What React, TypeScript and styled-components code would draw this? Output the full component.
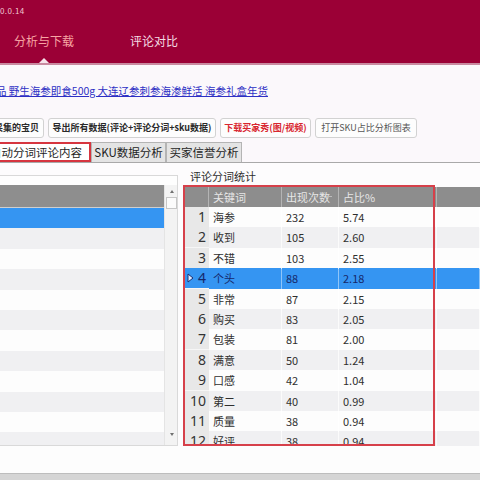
import styled, { createGlobalStyle } from "styled-components";

const GlobalStyle = createGlobalStyle`
  html, body { margin:0; padding:0; }
  body {
    width:480px;
    height:480px;
    overflow:hidden;
    background:#fbf8fb;
    font-family:"Noto Sans CJK SC","Noto Sans",sans-serif;
  }
`;

const Page = styled.div`
  width:480px;
  height:480px;
  display:flex;
  flex-direction:column;
  overflow:hidden;
`;

const TopBar = styled.header`
  height:63px;
  flex:none;
  background:#9b0036;
  border-bottom:2px solid #c98aa0;
  display:flex;
  flex-direction:column;
`;

const Version = styled.div`
  margin-top:6px;
  height:10px;
  line-height:10px;
  font-size:8px;
  color:#f0c6d1;
  letter-spacing:0.4px;
`;

const NavRow = styled.nav`
  margin-top:16px;
  height:31px;
  display:flex;
  padding-left:14px;
  gap:56px;
`;

const NavItem = styled.div<{ $active?: boolean }>`
  position:relative;
  font-size:12px;
  line-height:17px;
  color:${(p) => (p.$active ? "#f7a4a3" : "#f5dce3")};
  &::after{
    content:"";
    display:${(p) => (p.$active ? "block" : "none")};
    position:absolute;
    left:50%;
    bottom:0;
    margin-left:-5px;
    border-left:5px solid transparent;
    border-right:5px solid transparent;
    border-bottom:5px solid #f6e3ea;
  }
`;

const LinkRow = styled.div`
  padding-top:15px;
  height:16px;
  line-height:16px;
`;

const ItemLink = styled.a`
  margin-left:-4px;
  font-size:10.5px;
  color:#2d2fc4;
  text-decoration:underline;
  white-space:nowrap;
`;

const ButtonRow = styled.div`
  margin-top:22px;
  display:flex;
  gap:4px;
  height:20px;
`;

const ToolButton = styled.div<{ $w: number; $tone: "plain" | "bold" | "red"; $cut?: number }>`
  flex:none;
  box-sizing:border-box;
  width:${(p) => p.$w}px;
  margin-left:${(p) => (p.$cut ? -p.$cut : 0)}px;
  height:20px;
  border:1px solid #d2d2d2;
  border-radius:3px;
  background:#fdfdfd;
  font-size:9px;
  line-height:18px;
  text-align:center;
  white-space:nowrap;
  overflow:hidden;
  font-weight:${(p) => (p.$tone === "plain" ? 400 : 700)};
  color:${(p) => (p.$tone === "red" ? "#d8262f" : p.$tone === "bold" ? "#2a2a2a" : "#555")};
`;

const TabBar = styled.div`
  margin-top:4px;
  height:20px;
  display:flex;
  align-items:flex-end;
  border-bottom:1px solid #a9a9a9;
`;

const Tab = styled.div<{ $w: number; $active?: boolean; $cut?: number }>`
  flex:none;
  box-sizing:border-box;
  width:${(p) => p.$w}px;
  margin-left:${(p) => (p.$cut ? -p.$cut : 0)}px;
  height:20px;
  font-size:11.5px;
  line-height:${(p) => (p.$active ? 16 : 19)}px;
  white-space:nowrap;
  overflow:hidden;
  color:#1e1e1e;
  background:${(p) => (p.$active ? "#ffffff" : "#e4e4e4")};
  border:${(p) => (p.$active ? "2px solid #d6353f" : "1px solid #b4b4b4")};
  border-bottom:${(p) => (p.$active ? "2px solid #d6353f" : "none")};
  text-align:${(p) => (p.$active ? "right" : "center")};
  padding-right:${(p) => (p.$active ? 7 : 0)}px;
`;

const Content = styled.div`
  height:283px;
  flex:none;
  display:flex;
  background:#fdfcfd;
`;

const LeftPanel = styled.section`
  flex:none;
  box-sizing:border-box;
  width:179px;
  margin-left:-1px;
  margin-top:12px;
  border:1px solid #d9d9d9;
  padding-top:9px;
  display:flex;
  background:#fefefe;
  overflow:hidden;
`;

const LeftGrid = styled.div`
  width:164px;
  flex:none;
  display:flex;
  flex-direction:column;
  overflow:hidden;
`;

const HeaderBar = styled.div`
  height:22px;
  flex:none;
  background:#8e8e8e;
  border-bottom:1px solid #cfcfcf;
`;

const PlainRow = styled.div<{ $odd: boolean; $sel?: boolean }>`
  height:20.4px;
  flex:none;
  background:${(p) => (p.$sel ? "#3595f2" : p.$odd ? "#fdfdfd" : "#f0f0f2")};
`;

const ScrollBar = styled.div`
  width:13px;
  flex:none;
  background:#f3f3f3;
  border-left:1px solid #e4e4e4;
  display:flex;
  flex-direction:column;
  align-items:center;
  padding-bottom:3px;
`;

const Arrow = styled.div<{ $down?: boolean }>`
  margin-top:${(p) => (p.$down ? "auto" : "5px")};
  width:0;
  height:0;
  border-left:2.5px solid transparent;
  border-right:2.5px solid transparent;
  border-bottom:${(p) => (p.$down ? "none" : "3px solid #707070")};
  border-top:${(p) => (p.$down ? "3px solid #707070" : "none")};
  margin-bottom:${(p) => (p.$down ? "6px" : "0")};
`;

const Thumb = styled.div`
  margin-top:4px;
  width:11px;
  height:12px;
  box-sizing:border-box;
  background:#fbfbfb;
  border:1px solid #c6c6c6;
`;

const RightPanel = styled.section`
  flex:1;
  margin-left:5px;
  display:flex;
  flex-direction:column;
  min-width:0;
`;

const PanelLabel = styled.div`
  height:22px;
  box-sizing:border-box;
  padding:6px 0 0 7px;
  font-size:11px;
  line-height:14px;
  color:#2e2e2e;
`;

const GridFrame = styled.div`
  position:relative;
  height:261px;
  box-sizing:border-box;
  padding:2px 0 0 2px;
  overflow:hidden;
`;

const Highlight = styled.div`
  position:absolute;
  left:0;
  top:0;
  width:252px;
  height:261px;
  box-sizing:border-box;
  border:2px solid #d6404a;
  pointer-events:none;
`;

const Cols = "24px 73px 57px 98px 1fr";

const GridHead = styled.div`
  display:grid;
  grid-template-columns:${Cols};
  height:20px;
  background:#8d8d8d;
`;

const HeadCell = styled.div`
  position:relative;
  font-size:11px;
  line-height:20px;
  color:#e6e6e6;
  padding-left:4px;
  border-right:1px solid #b4b4b4;
  white-space:nowrap;
  &:last-child{ border-right:none; }
`;

const SortMark = styled.span`
  position:absolute;
  right:6px;
  top:9px;
  width:5px;
  height:1px;
  background:#bdbdbd;
`;

const GridRow = styled.div<{ $odd: boolean; $sel?: boolean }>`
  display:grid;
  grid-template-columns:${Cols};
  height:20.4px;
  background:${(p) => (p.$sel ? "#3595f2" : p.$odd ? "#fdfdfd" : "#f0f0f2")};
  color:${(p) => (p.$sel ? "#15286a" : "#2f2f2f")};
`;

const RowHead = styled.div<{ $sel?: boolean }>`
  position:relative;
  background:${(p) => (p.$sel ? "#3595f2" : "#e8e8e8")};
  border-bottom:1px solid #f6f6f6;
  box-sizing:border-box;
  font-family:"Noto Sans",sans-serif;
  font-size:14px;
  line-height:20px;
  text-align:right;
  padding-right:3px;
  color:${(p) => (p.$sel ? "#15286a" : "#333")};
`;

const Pointer = styled.svg`
  position:absolute;
  left:2px;
  top:5px;
`;

const Cell = styled.div<{ $sel?: boolean }>`
  font-size:11px;
  line-height:20px;
  padding-left:4px;
  border-right:1px solid ${(p) => (p.$sel ? "rgba(255,255,255,0.45)" : "rgba(255,255,255,0.7)")};
  white-space:nowrap;
  overflow:hidden;
`;

const Footer = styled.div`
  flex:1;
  background:#fdfdfd;
  border-bottom:6px solid #d5d5d5;
  box-shadow:inset 0 -1px 0 #bdbdbd;
`;

interface IWord {
  word: string;
  count: number;
  ratio: string;
}

const words: IWord[] = [
  { word: "海参", count: 232, ratio: "5.74" },
  { word: "收到", count: 105, ratio: "2.60" },
  { word: "不错", count: 103, ratio: "2.55" },
  { word: "个头", count: 88, ratio: "2.18" },
  { word: "非常", count: 87, ratio: "2.15" },
  { word: "购买", count: 83, ratio: "2.05" },
  { word: "包装", count: 81, ratio: "2.00" },
  { word: "满意", count: 50, ratio: "1.24" },
  { word: "口感", count: 42, ratio: "1.04" },
  { word: "第二", count: 40, ratio: "0.99" },
  { word: "质量", count: 38, ratio: "0.94" },
  { word: "好评", count: 38, ratio: "0.94" },
];

const SELECTED = 3;

function App() {
  return (
    <Page>
      <GlobalStyle />
      <TopBar>
        <Version>0.0.14</Version>
        <NavRow>
          <NavItem $active>分析与下载</NavItem>
          <NavItem>评论对比</NavItem>
        </NavRow>
      </TopBar>

      <LinkRow>
        <ItemLink href="#">品 野生海参即食500g 大连辽参刺参海渗鲜活 海参礼盒年货</ItemLink>
      </LinkRow>

      <ButtonRow>
        <ToolButton $w={55} $cut={11} $tone="bold">采集的宝贝</ToolButton>
        <ToolButton $w={168} $tone="bold">导出所有数据(评论+评论分词+sku数据)</ToolButton>
        <ToolButton $w={91} $tone="red">下载买家秀(图/视频)</ToolButton>
        <ToolButton $w={102} $tone="plain">打开SKU占比分析图表</ToolButton>
      </ButtonRow>

      <TabBar>
        <Tab $w={106} $cut={15} $active>自动分词评论内容</Tab>
        <Tab $w={75}>SKU数据分析</Tab>
        <Tab $w={76}>买家信誉分析</Tab>
      </TabBar>

      <Content>
        <LeftPanel>
          <LeftGrid>
            <HeaderBar />
            {Array.from({ length: 12 }).map((_, i) => (
              <PlainRow key={i} $odd={i % 2 === 0} $sel={i === 0} />
            ))}
          </LeftGrid>
          <ScrollBar>
            <Arrow />
            <Thumb />
            <Arrow $down />
          </ScrollBar>
        </LeftPanel>

        <RightPanel>
          <PanelLabel>评论分词统计</PanelLabel>
          <GridFrame>
            <GridHead>
              <HeadCell />
              <HeadCell>关键词</HeadCell>
              <HeadCell>
                出现次数
                <SortMark />
              </HeadCell>
              <HeadCell>占比%</HeadCell>
              <HeadCell />
            </GridHead>
            {words.map((w, i) => {
              const sel = i === SELECTED;
              return (
                <GridRow key={w.word + i} $odd={i % 2 === 0} $sel={sel}>
                  <RowHead $sel={sel}>
                    {sel && (
                      <Pointer width="7" height="10" viewBox="0 0 7 10">
                        <path d="M1 1 L6 5 L1 9 Z" fill="#dfeaff" stroke="#1a2f72" strokeWidth="1" />
                      </Pointer>
                    )}
                    {i + 1}
                  </RowHead>
                  <Cell $sel={sel}>{w.word}</Cell>
                  <Cell $sel={sel}>{w.count}</Cell>
                  <Cell $sel={sel}>{w.ratio}</Cell>
                  <Cell $sel={sel} />
                </GridRow>
              );
            })}
            <Highlight />
          </GridFrame>
        </RightPanel>
      </Content>

      <Footer />
    </Page>
  );
}

export default App;
